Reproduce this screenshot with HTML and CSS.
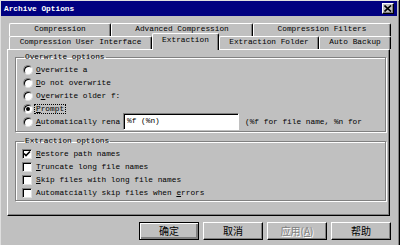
FILE: index.html
```html
<!DOCTYPE html>
<html lang="en">

<head>
    <meta charset="UTF-8">
    <meta name="viewport" content="width=device-width, initial-scale=1.0">
    <title>Archive Options</title>
    <link rel="stylesheet" href="styles.css">
</head>

<body>

    <div class="window">
        <div class="titlebar">
            <span class="title">Archive Options</span>
            <span class="close-btn">
                <svg width="8" height="7" viewBox="0 0 8 7"><path d="M0.5 0.5 L7 6.5 M7 0.5 L0.5 6.5" stroke="#000" stroke-width="1.6"/></svg>
            </span>
        </div>

        <div class="tabs">
            <div class="tab-row">
                <div class="tab w-comp">Compression</div>
                <div class="tab w-adv">Advanced Compression</div>
                <div class="tab w-filt">Compression Filters</div>
            </div>
            <div class="tab-row">
                <div class="tab w-cui">Compression User Interface</div>
                <div class="tab w-ext active">Extraction</div>
                <div class="tab w-fold">Extraction Folder</div>
                <div class="tab w-back">Auto Backup</div>
            </div>
        </div>

        <div class="panel">
            <fieldset class="group group-overwrite">
                <legend>Overwrite options</legend>
                <div class="row"><span class="radio"></span><span><u>O</u>verwrite a</span></div>
                <div class="row"><span class="radio"></span><span><u>D</u>o not overwrite</span></div>
                <div class="row"><span class="radio"></span><span>O<u>v</u>erwrite older f:</span></div>
                <div class="row"><span class="radio checked"></span><span class="focus"><u>P</u>rompt</span></div>
                <div class="row row-rename">
                    <span class="radio"></span><span class="rename-label"><u>A</u>utomatically rena</span>
                    <span class="textbox">%f (%n)</span>
                    <span class="hint">(%f for file name, %n for</span>
                </div>
            </fieldset>

            <fieldset class="group group-extract">
                <legend>Extraction options</legend>
                <div class="row"><span class="check checked">
                    <svg width="8" height="8" viewBox="0 0 8 8"><path d="M1 3.5 L3 5.5 L7 1.5" stroke="#000" stroke-width="1.6" fill="none"/></svg>
                </span><span><u>R</u>estore path names</span></div>
                <div class="row"><span class="check"></span><span><u>T</u>runcate long file names</span></div>
                <div class="row"><span class="check"></span><span><u>S</u>kip files with long file names</span></div>
                <div class="row"><span class="check"></span><span>Automatcially skip files when <u>e</u>rrors</span></div>
            </fieldset>
        </div>

        <div class="buttons">
            <button class="btn default">确定</button>
            <button class="btn">取消</button>
            <button class="btn disabled">应用(<u>A</u>)</button>
            <button class="btn">帮助</button>
        </div>
    </div>

</body>

</html>
```

FILE: styles.css
```css
body {
    margin: 0;
    background-color: #c0c0c0;
    font-family: 'Liberation Mono', 'DejaVu Sans Mono', monospace;
    font-size: 7.8px;
    color: #000;
}

.window {
    width: 400px;
    height: 245px;
    box-sizing: border-box;
    padding: 1px 2px 0 1px;
    background-color: #c0c0c0;
    border-right: 1px solid #000;
    box-shadow: inset 1px 1px 0 #dfdfdf, inset -1px 0 0 #808080;
}

.titlebar {
    height: 15px;
    background-color: #000080;
    display: flex;
    align-items: center;
    justify-content: space-between;
    padding: 0 3px 0 3px;
}

.title {
    color: #fff;
    font-weight: bold;
    font-size: 7.8px;
}

.close-btn {
    width: 12px;
    height: 11px;
    box-sizing: border-box;
    background-color: #c0c0c0;
    border-top: 1px solid #fff;
    border-left: 1px solid #fff;
    border-right: 1px solid #000;
    border-bottom: 1px solid #000;
    box-shadow: inset -1px -1px 0 #808080;
    display: flex;
    align-items: center;
    justify-content: center;
}

.tabs {
    margin-top: 7px;
    padding-left: 8px;
}

.tab-row {
    display: flex;
    height: 13px;
}

.tab {
    box-sizing: border-box;
    height: 13px;
    line-height: 11px;
    text-align: center;
    border-top: 1px solid #fff;
    border-left: 1px solid #fff;
    border-right: 1px solid #000;
    box-shadow: inset -1px 0 0 #808080;
    border-radius: 2px 2px 0 0;
    white-space: nowrap;
}

.tab.active {
    position: relative;
    height: 17px;
    margin-top: -3px;
    line-height: 13px;
    background-color: #c0c0c0;
    z-index: 1;
}

.w-comp { width: 102px; }
.w-adv { width: 142px; }
.w-filt { width: 138px; }
.w-cui { width: 143px; }
.w-ext { width: 67px; }
.w-fold { width: 100px; }
.w-back { width: 72px; }

.panel {
    height: 167px;
    box-sizing: border-box;
    margin: 0 7px 0 6px;
    padding-top: 2px;
    border-top: 1px solid #fff;
    border-left: 1px solid #fff;
    border-right: 1px solid #000;
    border-bottom: 1px solid #000;
    box-shadow: inset -1px -1px 0 #808080;
}

.group {
    margin: 0 3px 0 7px;
    padding: 1px 0 1px 7px;
    border: 1px solid #808080;
    box-shadow: 1px 1px 0 #fff, inset 1px 1px 0 #fff;
    min-width: 0;
}

.group legend {
    padding: 0 1px;
    margin-left: 1px;
    line-height: 10px;
}

.group-extract {
    margin-top: 4px;
    padding-bottom: 1px;
}

.row {
    display: flex;
    align-items: center;
    height: 13px;
    white-space: nowrap;
}

.row-rename {
    height: 17px;
    margin-top: -2px;
}

.radio {
    width: 10px;
    height: 10px;
    box-sizing: border-box;
    border-radius: 50%;
    background-color: #fff;
    border: 1px solid;
    border-color: #808080 #dfdfdf #dfdfdf #808080;
    box-shadow: inset 1px 1px 0 #000;
    margin-right: 3px;
    display: flex;
    align-items: center;
    justify-content: center;
}

.radio.checked::after {
    content: '';
    width: 4px;
    height: 4px;
    border-radius: 50%;
    background-color: #000;
}

.check {
    width: 10px;
    height: 10px;
    box-sizing: border-box;
    background-color: #fff;
    border: 1px solid;
    border-color: #808080 #dfdfdf #dfdfdf #808080;
    box-shadow: inset 1px 1px 0 #000;
    margin-left: -1px;
    margin-right: 4px;
    display: flex;
    align-items: center;
    justify-content: center;
}

.focus {
    outline: 1px dotted #000;
    outline-offset: 0;
    padding: 0 1px;
    margin-left: -1px;
}

.rename-label {
    width: 87px;
}

.textbox {
    width: 116px;
    height: 17px;
    box-sizing: border-box;
    background-color: #fff;
    border-top: 1px solid #808080;
    border-left: 1px solid #808080;
    border-right: 1px solid #fff;
    border-bottom: 1px solid #fff;
    box-shadow: inset 1px 1px 0 #000;
    padding: 0 3px;
    line-height: 15px;
}

.hint {
    margin-left: 6px;
}

.buttons {
    display: flex;
    justify-content: flex-end;
    gap: 4px;
    margin-top: 6px;
    padding-right: 6px;
}

.btn {
    width: 60px;
    height: 18px;
    box-sizing: border-box;
    padding: 0;
    font-family: 'Noto Sans CJK SC', sans-serif;
    font-size: 10px;
    line-height: 14px;
    color: #000;
    background-color: #c0c0c0;
    border-top: 1px solid #fff;
    border-left: 1px solid #fff;
    border-right: 1px solid #000;
    border-bottom: 1px solid #000;
    box-shadow: inset -1px -1px 0 #808080;
}

.btn.default {
    border: 1px solid #000;
    box-shadow: inset 1px 1px 0 #fff, inset -2px -2px 0 #808080;
}

.btn.disabled {
    color: #808080;
    text-shadow: 1px 1px 0 #fff;
}
```
